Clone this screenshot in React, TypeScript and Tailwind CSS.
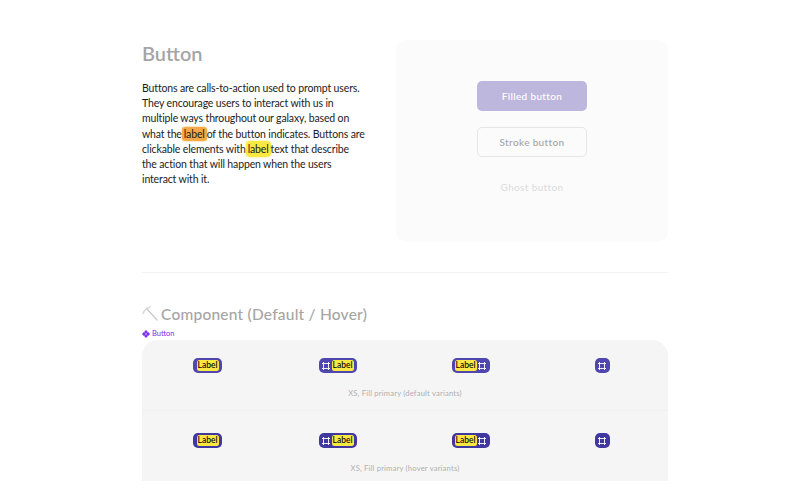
const geo = { fontFamily: '"Lato", sans-serif' };

function FrameIcon() {
  return (
    <svg width="8" height="8" viewBox="0 0 8 8" fill="none" stroke="#ffffff" strokeWidth="0.9" className="shrink-0">
      <path d="M1.5 0V8M6.5 0V8M0 1.5H8M0 6.5H8" />
    </svg>
  );
}

function YellowLabel() {
  return (
    <span className="flex h-[11px] w-[22px] items-center justify-center rounded-[2.5px] bg-[#fbe843] text-[8.5px] leading-none font-medium text-black">
      Label
    </span>
  );
}

function Variants({ caption, color, top, gap }: { caption: string; color: string; top: string; gap: string }) {
  const cell = "flex justify-center";
  const base = `flex h-[15px] items-center rounded-[5px] ${color}`;
  return (
    <div className="flex h-[70px] flex-col">
      <div className={`grid grid-cols-[131px_129px_137px_126px] ${top}`}>
        <div className={cell}>
          <div className={`${base} w-[29px] justify-center`}>
            <YellowLabel />
          </div>
        </div>
        <div className={cell}>
          <div className={`${base} w-[38px] justify-between pr-[3px] pl-[3.5px]`}>
            <FrameIcon />
            <YellowLabel />
          </div>
        </div>
        <div className={cell}>
          <div className={`${base} w-[38px] justify-between pr-[3.5px] pl-[3px]`}>
            <YellowLabel />
            <FrameIcon />
          </div>
        </div>
        <div className={cell}>
          <div className={`${base} w-[15px] justify-center`}>
            <FrameIcon />
          </div>
        </div>
      </div>
      <p className={`${gap} text-center text-[7.6px] leading-[12px] tracking-[0.2px] text-[#b0b0b0]`}>{caption}</p>
    </div>
  );
}

export default function App() {
  return (
    <div className="h-[500px] w-[800px] overflow-hidden bg-white pt-[40px] pl-[142px] text-black" style={geo}>
      <div className="w-[526px]">
        <section className="flex justify-between border-b border-[#f3f3f3] pb-[30px]">
          <div className="w-[223px]">
            <h1 className="text-[20px] leading-[26px] font-semibold text-[#a5a5a5]">Button</h1>
            <p className="mt-[15px] text-[10.5px] leading-[15.2px] tracking-[-0.14px] text-[#1c1c1c]">
              Buttons are calls-to-action used to prompt users. They encourage users to interact with us in multiple ways throughout our galaxy, based on what the
              <span className="rounded-[3px] bg-[#f5a846] px-[2px] py-[1px] shadow-[0_0_2px_#f5a846]">label</span>of the button indicates. Buttons are clickable elements with
              <span className="rounded-[4px] bg-[#fbe843] px-[2px] py-[2px] shadow-[0_0_2px_#fbe843]">label</span>text that describe the action that will happen when the users interact with it.
            </p>
          </div>
          <div className="flex h-[202px] w-[272px] flex-col items-center rounded-[10px] bg-[#fbfbfb] pt-[41px]">
            <div className="flex h-[30px] w-[110px] items-center justify-center rounded-[5px] bg-[#bdb7de] text-[10px] font-medium tracking-[0.35px] text-white">
              Filled button
            </div>
            <div className="mt-[16px] flex h-[30px] w-[110px] items-center justify-center rounded-[5px] border border-[#e6e6e6] text-[10px] font-medium tracking-[0.35px] text-[#a3a3a3]">
              Stroke button
            </div>
            <div className="mt-[15px] flex h-[30px] w-[110px] items-center justify-center text-[10px] font-medium tracking-[0.35px] text-[#dddddd]">
              Ghost button
            </div>
          </div>
        </section>

        <div className="mt-[31px] flex h-[20px] items-center gap-[3px]">
          <svg width="16" height="16" viewBox="0 0 16 16" fill="none" className="shrink-0">
            <path d="M1 7.5C2.5 4 5 1.8 8 1" stroke="#d9d9d9" strokeWidth="1.6" strokeLinecap="round" />
            <path d="M5 3L15 14" stroke="#c9c9c9" strokeWidth="1.2" strokeLinecap="round" />
          </svg>
          <h2 className="text-[15.5px] leading-[20px] font-medium tracking-[0.22px] text-[#a5a5a5]">Component (Default / Hover)</h2>
        </div>
        <div className="mt-[4px] flex h-[11px] items-center gap-[2px] text-[7.5px] leading-none text-[#7b2ff0]">
          <svg width="8" height="8" viewBox="0 0 8 8" fill="#7b2ff0" className="shrink-0">
            <path d="M4 0L5.9 1.9L4 3.8L2.1 1.9ZM1.9 2.1L3.8 4L1.9 5.9L0 4ZM6.1 2.1L8 4L6.1 5.9L4.2 4ZM4 4.2L5.9 6.1L4 8L2.1 6.1Z" />
          </svg>
          <span>Button</span>
        </div>

        <div className="mt-[1px] flex flex-col rounded-t-[16px] bg-[#f5f5f5]">
          <Variants caption="XS, Fill primary (default variants)" color="bg-[#4f46b0]" top="pt-[18px]" gap="mt-[14px]" />
          <div className="border-t border-[#f0f0f0]">
            <Variants caption="XS, Fill primary (hover variants)" color="bg-[#40389f]" top="pt-[22px]" gap="mt-[14px]" />
          </div>
        </div>
      </div>
    </div>
  );
}
